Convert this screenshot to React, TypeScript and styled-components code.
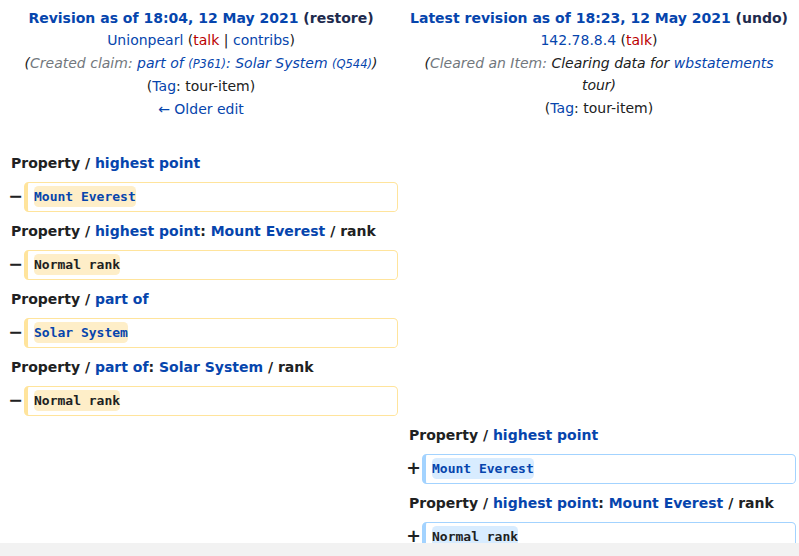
import React from "react";
import styled, { createGlobalStyle } from "styled-components";

const Global = createGlobalStyle`
  html, body { margin: 0; padding: 0; background: #ffffff; }
  body { font-family: "DejaVu Sans", "Noto Sans", sans-serif; font-size: 14px; color: #202122; overflow: hidden; }
`;

const Page = styled.div`
  padding: 4px 3px 0 4px;
`;

const DiffGrid = styled.div`
  display: grid;
  grid-template-columns: 16px 374px 16px 374px;
  column-gap: 4px;
  row-gap: 4px;
`;

const Header = styled.div`
  grid-column: span 2;
  text-align: center;
  line-height: 22.4px;
  padding: 3px 7px 24px;
`;

const HeaderLine = styled.div``;

const Link = styled.a<{ $red?: boolean; $bold?: boolean }>`
  color: ${(p) => (p.$red ? "#ba0000" : "#0645ad")};
  font-weight: ${(p) => (p.$bold ? 700 : "inherit")};
  text-decoration: none;
  cursor: pointer;
`;

const Bold = styled.span`
  font-weight: 700;
`;

const Dark = styled.span`
  color: #202a4d;
`;

const Comment = styled.span`
  font-style: italic;
`;

const AutoComment = styled.span`
  color: #72777d;
`;

const SmallId = styled.span`
  font-size: 11.5px;
`;

const Title = styled.div`
  grid-column: span 2;
  font-weight: 700;
  line-height: 22px;
  padding: 4px 7px;
  white-space: nowrap;
`;

const Empty = styled.div`
  grid-column: span 2;
`;

const Marker = styled.div`
  display: flex;
  align-items: center;
  justify-content: flex-end;
  font-weight: 700;
  font-size: 17.5px;
  line-height: 1;
`;

const MarkerGlyph = styled.span`
  margin-right: -3px;
`;

const ChangeBox = styled.div<{ $kind: "del" | "ins" }>`
  border: 1px solid ${(p) => (p.$kind === "del" ? "#ffe49c" : "#a3d3ff")};
  border-left-width: 4px;
  border-radius: 4.6px;
  padding: 3px 6px;
  line-height: 22px;
  height: 30px;
  box-sizing: border-box;
  font-family: "DejaVu Sans Mono", "Liberation Mono", monospace;
  font-size: 13px;
`;

const Change = styled.span<{ $kind: "del" | "ins"; $link?: boolean }>`
  background: ${(p) => (p.$kind === "del" ? "#feeec8" : "#d8ecff")};
  color: ${(p) => (p.$link ? "#0645ad" : "#202122")};
  font-weight: 700;
  padding: 3px 0;
  border-radius: 4.6px;
`;

const ScrollTrack = styled.div`
  position: fixed;
  left: 0;
  right: 0;
  bottom: 0;
  height: 13px;
  background: #f2f2f2;
`;

type Part = { text: string; link?: boolean };
type Row =
  | { type: "title"; side: "left" | "right"; parts: Part[] }
  | { type: "change"; side: "left" | "right"; text: string; link?: boolean };

const rows: Row[] = [
  { type: "title", side: "left", parts: [{ text: "Property / " }, { text: "highest point", link: true }] },
  { type: "change", side: "left", text: "Mount Everest", link: true },
  {
    type: "title",
    side: "left",
    parts: [{ text: "Property / " }, { text: "highest point", link: true }, { text: ": " }, { text: "Mount Everest", link: true }, { text: " / rank" }],
  },
  { type: "change", side: "left", text: "Normal rank" },
  { type: "title", side: "left", parts: [{ text: "Property / " }, { text: "part of", link: true }] },
  { type: "change", side: "left", text: "Solar System", link: true },
  {
    type: "title",
    side: "left",
    parts: [{ text: "Property / " }, { text: "part of", link: true }, { text: ": " }, { text: "Solar System", link: true }, { text: " / rank" }],
  },
  { type: "change", side: "left", text: "Normal rank" },
  { type: "title", side: "right", parts: [{ text: "Property / " }, { text: "highest point", link: true }] },
  { type: "change", side: "right", text: "Mount Everest", link: true },
  {
    type: "title",
    side: "right",
    parts: [{ text: "Property / " }, { text: "highest point", link: true }, { text: ": " }, { text: "Mount Everest", link: true }, { text: " / rank" }],
  },
  { type: "change", side: "right", text: "Normal rank" },
];

function renderSide(row: Row, side: "left" | "right", key: string) {
  if (row.side !== side) return <Empty key={key} />;
  if (row.type === "title") {
    return (
      <Title key={key}>
        {row.parts.map((p, i) => (p.link ? <Link key={i}>{p.text}</Link> : <span key={i}>{p.text}</span>))}
      </Title>
    );
  }
  const kind = side === "left" ? "del" : "ins";
  return (
    <React.Fragment key={key}>
      <Marker>
        <MarkerGlyph>{side === "left" ? "−" : "+"}</MarkerGlyph>
      </Marker>
      <ChangeBox $kind={kind}>
        <Change $kind={kind} $link={row.link}>
          {row.text}
        </Change>
      </ChangeBox>
    </React.Fragment>
  );
}

export default function App() {
  return (
    <>
      <Global />
      <Page>
        <DiffGrid>
          <Header>
            <HeaderLine>
              <Bold>
                <Link>Revision as of 18:04, 12 May 2021</Link> <Dark>(restore)</Dark>
              </Bold>
            </HeaderLine>
            <HeaderLine>
              <Link>Unionpearl</Link> (<Link $red>talk</Link> | <Link>contribs</Link>)
            </HeaderLine>
            <HeaderLine>
              <Comment>
                (<AutoComment>Created claim: </AutoComment>
                <Link>
                  part of <SmallId>(P361)</SmallId>: Solar System <SmallId>(Q544)</SmallId>
                </Link>
                )
              </Comment>
            </HeaderLine>
            <HeaderLine>
              (<Link>Tag</Link>: tour-item)
            </HeaderLine>
            <HeaderLine>
              <Link>← Older edit</Link>
            </HeaderLine>
          </Header>
          <Header>
            <HeaderLine>
              <Bold>
                <Link>Latest revision as of 18:23, 12 May 2021</Link> <Dark>(undo)</Dark>
              </Bold>
            </HeaderLine>
            <HeaderLine>
              <Link>142.78.8.4</Link> (<Link $red>talk</Link>)
            </HeaderLine>
            <HeaderLine>
              <Comment>
                (<AutoComment>Cleared an Item: </AutoComment>Clearing data for <Link>wbstatements</Link> tour)
              </Comment>
            </HeaderLine>
            <HeaderLine>
              (<Link>Tag</Link>: tour-item)
            </HeaderLine>
          </Header>
          {rows.map((row, i) => (
            <React.Fragment key={i}>
              {renderSide(row, "left", `l${i}`)}
              {renderSide(row, "right", `r${i}`)}
            </React.Fragment>
          ))}
        </DiffGrid>
      </Page>
      <ScrollTrack />
    </>
  );
}
